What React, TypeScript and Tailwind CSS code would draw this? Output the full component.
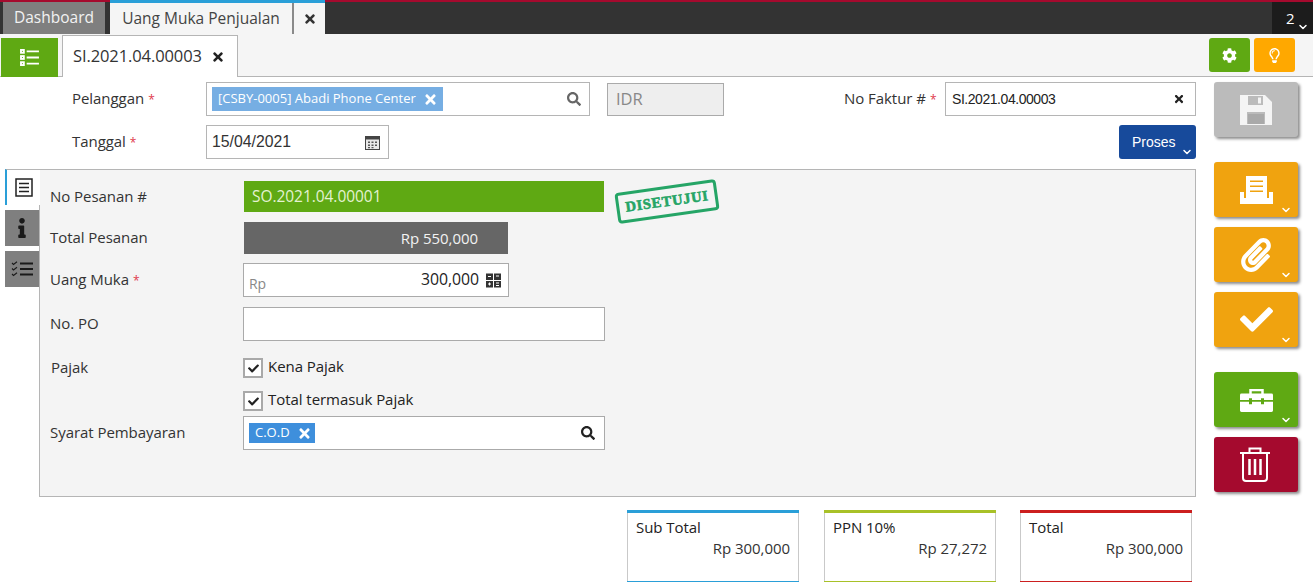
import React from "react";
import { FaTimes, FaSearch, FaCog, FaCheck, FaInfo, FaRegLightbulb, FaPaperclip } from "react-icons/fa";
import { ChevronDown } from "lucide-react";

const sans = "font-['Open_Sans','Noto_Sans',sans-serif]";
const arial = "font-['Liberation_Sans',Arial,sans-serif]";
const label = "-mt-[2px] ";

function Chev({ className = "" }: { className?: string }) {
  return <ChevronDown size={12} strokeWidth={3} className={"absolute text-white " + className} />;
}

function Star() {
  return <span className="ml-1 text-[12px] text-[#e0384c]">*</span>;
}

function RailButton({ color, children, chevron = true }: { color: string; children: React.ReactNode; chevron?: boolean }) {
  return (
    <div className={"relative flex h-[55px] w-[84px] items-center justify-center rounded-[3px] shadow-[2px_2px_3px_rgba(0,0,0,0.45)] " + color}>
      {children}
      {chevron && <Chev className="right-[6px] bottom-[1px]" />}
    </div>
  );
}

function Check({ label, className = "" }: { label: string; className?: string }) {
  return (
    <div className={"flex items-center " + className}>
      <div className="flex h-[20px] w-[20px] items-center justify-center border-2 border-[#a9a9a9] bg-white">
        <FaCheck size={11} className="text-[#222]" />
      </div>
      <span className="ml-[5px] -mt-[5px] text-[15px] leading-[20px] tracking-[-0.05px] text-[#222]">{label}</span>
    </div>
  );
}

function Total({ title, value, color, className = "" }: { title: string; value: string; color: string; className?: string }) {
  return (
    <div className={"relative h-[72px] w-[172px] border-x border-[#c9c9c9] bg-white px-2 " + className}>
      <div className={"absolute -left-px -right-px top-0 h-[3px] " + color} />
      <div className={"absolute -left-px -right-px bottom-0 h-px " + color} />
      <div className="pt-[7px] text-[15px] leading-[20px] tracking-[-0.05px] text-[#222]">{title}</div>
      <div className="mt-px text-right text-[15px] leading-[20px] tracking-[-0.05px] text-[#333]">{value}</div>
    </div>
  );
}

export default function App() {
  return (
    <div className={"h-[588px] w-[1313px] overflow-hidden bg-white " + sans}>
      {/* top bar */}
      <div className="flex h-[34px] border-t-2 border-[#a50a2e] bg-[#333333]">
        <div className="ml-[3px] flex w-[102px] items-center justify-center bg-[#7f7f7f] text-[15.5px] text-[#f2f2f2]">Dashboard</div>
        <div className="ml-[5px] flex w-[215px] -mt-[2px] border-t-[3px] border-[#2a9fd8] bg-[#f5f5f5]">
          <div className="flex w-[182px] items-center justify-center text-[15.5px] text-[#444]">Uang Muka Penjualan</div>
          <div className="w-[2px] bg-[#8a8a8a]" />
          <div className="flex flex-1 items-center justify-center"><FaTimes size={14} className="text-[#333]" /></div>
        </div>
        <div className="relative ml-auto flex w-[41px] items-center bg-[#1c1c1c] pl-[14px] text-[15px] text-white">
          2
          <Chev className="right-[4px] bottom-[1px]" />
        </div>
      </div>

      {/* toolbar */}
      <div className="flex h-[43px] items-end border-b border-[#b5b5b5] bg-[#f5f5f5]">
        <div className="mb-[-1px] ml-px flex h-[39px] w-[57px] items-center justify-center bg-[#5fa913]">
          <svg width="19" height="17" viewBox="0 0 20 18" fill="none" stroke="#fff" strokeWidth="2">
            <rect x="1" y="1" width="3" height="3" /><rect x="1" y="7.5" width="3" height="3" /><rect x="1" y="14" width="3" height="3" />
            <path d="M7 2.500h13M7 9h13M7 15.500h13" />
          </svg>
        </div>
        <div className="mb-[-1px] ml-[4px] flex h-[42px] w-[176px] items-center border border-b-0 border-[#b5b5b5] bg-white pl-[10px] text-[16.5px] tracking-[-0.1px] text-[#333]">
          SI.2021.04.00003
          <FaTimes size={14} className="ml-[9px] text-[#222]" />
        </div>
        <div className="mb-[4px] ml-auto flex h-[34px] w-[41px] items-center justify-center rounded-[3px] bg-[#5fa913]"><FaCog size={15} className="text-white" /></div>
        <div className="mb-[4px] ml-[4px] mr-[18px] flex h-[34px] w-[41px] items-center justify-center rounded-[3px] bg-[#ffa800]"><FaRegLightbulb size={15} className="text-white" /></div>
      </div>

      <div className="flex">
        {/* main column */}
        <div className="w-[1196px]">
          {/* header form */}
          <div className="mt-[5px] flex h-[34px] items-center">
            <div className={label + "ml-[72px] w-[134px] text-[15px] tracking-[-0.05px] text-[#333]"}>Pelanggan<Star /></div>
            <div className="flex h-[34px] w-[384px] items-center border border-[#b5b5b5] px-[5px]">
              <div className="flex h-[24px] items-center bg-[#76aee3] pl-[6px] pr-[5px] text-[13px] text-white">
                [CSBY-0005] Abadi Phone Center
                <FaTimes size={15} className="ml-[7px]" />
              </div>
              <FaSearch size={14} className="ml-auto mr-[3px] text-[#666]" />
            </div>
            <div className="ml-[17px] flex h-[33px] w-[117px] items-center border border-[#aaaaaa] bg-[#eeeeee] pl-[8px] text-[16.5px] text-[#888]">IDR</div>
            <div className={label + "ml-auto w-[101px] text-[15px] tracking-[-0.05px] text-[#333]"}>No Faktur #<Star /></div>
            <div className={"flex h-[34px] w-[251px] items-center border border-[#b5b5b5] pl-[6px] pr-[10px] text-[14px] tracking-[-0.45px] text-[#222] " + arial}>
              SI.2021.04.00003
              <FaTimes size={12} className="ml-auto text-[#222]" />
            </div>
          </div>
          <div className="mt-[9px] flex h-[34px] items-center">
            <div className={label + "ml-[72px] w-[134px] text-[15px] tracking-[-0.05px] text-[#333]"}>Tanggal<Star /></div>
            <div className={"flex h-[34px] w-[183px] items-center border border-[#b5b5b5] pl-[5px] pr-[8px] text-[15.8px] text-[#333] " + arial}>
              15/04/2021
              <svg className="ml-auto" width="15" height="15" viewBox="0 0 15 15">
                <rect x="0.5" y="1.500" width="14" height="13" fill="#e8e8e8" stroke="#444" />
                <rect x="0.5" y="1" width="14" height="3.500" fill="#444" />
                <path d="M3 6.500h2v1.500H3zM6.500 6.500h2v1.500h-2zM10 6.500h2v1.500h-2zM3 9.500h2V11H3zM6.500 9.500h2V11h-2zM10 9.500h2V11h-2zM3 12h2v1.200H3zM6.500 12h2v1.200h-2z" fill="#555" />
              </svg>
            </div>
            <div className={"relative ml-auto flex h-[34px] w-[77px] items-center rounded-[3px] bg-[#174a9b] pl-[13px] text-[14px] text-white " + arial}>
              Proses
              <Chev className="right-[3px] bottom-[1px]" />
            </div>
          </div>

          {/* tabbed panel */}
          <div className="mt-[10px] flex">
            <div className="relative z-10 ml-[5px] -mr-px flex w-[35px] flex-col">
              <div className="flex h-[36px] items-center justify-center border-l-2 border-t border-l-[#2a9fd8] border-t-[#b5b5b5] bg-white">
                <svg width="18" height="19" viewBox="0 0 18 19" fill="none" stroke="#222" strokeWidth="1.500">
                  <rect x="1" y="1" width="16" height="17" />
                  <path d="M4 5.500h10M4 9.500h10M4 13.500h10" />
                </svg>
              </div>
              <div className="mt-[5px] flex h-[36px] w-[34px] items-center justify-center bg-[#7f7f7f]"><FaInfo size={20} className="text-[#1a1a1a]" /></div>
              <div className="mt-[5px] flex h-[36px] w-[34px] items-center justify-center bg-[#7f7f7f]">
                <svg width="22" height="16" viewBox="0 0 22 16" fill="none" stroke="#1a1a1a">
                  <path d="M9 2.500h13M9 8h13M9 13.500h13" strokeWidth="2" />
                  <path d="M1 2l1.500 1.500L6 .8M1 7.500L2.500 9 6 6.300M1 13l1.500 1.500L6 11.800" strokeWidth="1.100" />
                </svg>
              </div>
            </div>
            <div className="relative h-[328px] flex-1 border border-[#b5b5b5] bg-[#f4f4f4] pl-[10px] text-[15px] tracking-[-0.05px] text-[#333]">
              <div className="mt-[11px] flex h-[31px] items-center">
                <div className="w-[194px]">No Pesanan #</div>
                <div className="flex h-[31px] w-[360px] items-center bg-[#5fa913] pl-[8px] text-[15.5px] text-[#e4f2d2]">SO.2021.04.00001</div>
              </div>
              <div className="absolute left-[576px] top-[16px] flex h-[31px] w-[102px] -rotate-[8deg] items-center justify-center rounded-[4px] border-[3.5px] border-[#25a566] font-['Liberation_Serif',serif] text-[14.5px] font-bold tracking-[0.7px] text-[#25a566] [-webkit-text-stroke:0.6px_#25a566]">DISETUJUI</div>
              <div className="mt-[10px] flex h-[32px] items-center">
                <div className={label + "w-[194px]"}>Total Pesanan</div>
                <div className="flex h-[32px] w-[264px] items-center justify-end bg-[#666666] pr-[30px] text-[#f2f2f2]">Rp 550,000</div>
              </div>
              <div className="mt-[9px] flex h-[34px] items-center">
                <div className={label + "w-[193px]"}>Uang Muka<Star /></div>
                <div className="flex h-[34px] w-[266px] items-center border border-[#aaaaaa] bg-white pl-[5px] pr-[7px]">
                  <span className="mt-[6px] text-[14px] text-[#888]">Rp</span>
                  <span className="ml-auto text-[15.8px] text-[#222]">300,000</span>
                  <svg className="ml-[7px]" width="15" height="15" viewBox="0 0 15 15" fill="#333">
                    <rect x="0" y="0.500" width="7" height="6.500" /><rect x="8" y="0.500" width="7" height="6.500" />
                    <rect x="0" y="8" width="7" height="6.500" /><rect x="8" y="8" width="7" height="6.500" />
                    <path d="M2 3.500h3M2 11h3M3.500 9.500v3M10 3h3M10 10h3M10 12.500h3" stroke="#fff" strokeWidth="1" />
                  </svg>
                </div>
              </div>
              <div className="mt-[10px] flex h-[34px] items-center">
                <div className={label + "w-[193px]"}>No. PO</div>
                <div className="h-[34px] w-[362px] border border-[#aaaaaa] bg-white" />
              </div>
              <div className="mt-[17px] flex h-[20px] items-center">
                <div className={label + "ml-px w-[192px]"}>Pajak</div>
                <Check label="Kena Pajak" />
              </div>
              <Check label="Total termasuk Pajak" className="ml-[193px] mt-[13px]" />
              <div className="mt-[5px] flex h-[34px] items-center">
                <div className={label + "w-[193px]"}>Syarat Pembayaran</div>
                <div className="flex h-[34px] w-[362px] items-center border border-[#aaaaaa] bg-white pl-[5px] pr-[9px]">
                  <div className="flex h-[20px] items-center bg-[#3e8fdc] pl-[6px] pr-[3px] text-[13px] tracking-normal text-white">
                    C.O.D
                    <FaTimes size={15} className="ml-[7px]" />
                  </div>
                  <FaSearch size={14} className="ml-auto text-[#222]" />
                </div>
              </div>
            </div>
          </div>

          {/* totals */}
          <div className="mt-[13px] flex">
            <Total title="Sub Total" value="Rp 300,000" color="bg-[#2a9fd8]" className="ml-[627px]" />
            <Total title="PPN 10%" value="Rp 27,272" color="bg-[#a8c128]" className="ml-[25px]" />
            <Total title="Total" value="Rp 300,000" color="bg-[#cc1f1f]" className="ml-[24px]" />
          </div>
        </div>

        {/* right rail */}
        <div className="ml-[18px] mt-[5px] flex w-[84px] flex-col">
          <RailButton color="bg-[#bbbbbb]" chevron={false}>
            <svg width="34" height="32" viewBox="0 0 34 32">
              <path fillRule="evenodd" fill="#f4f4f4" d="M1 1h25l7 7v23H1zM9 2v9h15V2zM19 3.500h3v6h-3zM8 18v12h18V18z" />
              <rect x="9" y="20" width="16" height="10" fill="#a9a9a9" />
            </svg>
          </RailButton>
          <div className="mt-[25px]">
            <RailButton color="bg-[#f0a30f]">
              <svg width="33" height="28" viewBox="0 0 33 28">
                <path fill="#fff" fillRule="evenodd" d="M6 0h21v22H6zM10 4.500v1.500h13V4.500zM10 9.500v1.500h13V9.500zM10 14.500v1.500h13v-1.500z" />
                <path fill="#fff" d="M0 16h4v6h25v-6h4v12H0z" />
              </svg>
            </RailButton>
          </div>
          <div className="mt-[10px]">
            <RailButton color="bg-[#f0a30f]"><FaPaperclip size={34} className="text-white" /></RailButton>
          </div>
          <div className="mt-[10px]">
            <RailButton color="bg-[#f0a30f]"><FaCheck size={33} className="text-white" /></RailButton>
          </div>
          <div className="mt-[25px]">
            <RailButton color="bg-[#5fa913]">
              <svg width="33" height="24" viewBox="0 0 33 26" preserveAspectRatio="none">
                <path fill="none" stroke="#fff" strokeWidth="2.500" d="M10.500 7V2.200h12V7" />
                <path fill="#fff" d="M1.500 6h30a1.500 1.500 0 0 1 1.500 1.500V13H24v-2h-3v2H12v-2H9v2H0V7.500A1.500 1.500 0 0 1 1.500 6zM0 15h9v2.500h3V15h9v2.500h3V15h9v9.500a1.500 1.500 0 0 1-1.500 1.500h-30A1.500 1.500 0 0 1 0 24.500z" />
              </svg>
            </RailButton>
          </div>
          <div className="mt-[10px]">
            <RailButton color="bg-[#a50a2e]" chevron={false}>
              <svg className="-ml-[2px]" width="32" height="35" viewBox="0 0 32 35" fill="none" stroke="#fff" strokeWidth="2">
                <path d="M1 6h30M10.500 5.500V1.500h11v4M4 6v25a3 3 0 0 0 3 3h18a3 3 0 0 0 3-3V6" />
                <path d="M10.500 12v16M16 12v16M21.500 12v16" strokeWidth="2.500" />
              </svg>
            </RailButton>
          </div>
        </div>
      </div>
    </div>
  );
}
